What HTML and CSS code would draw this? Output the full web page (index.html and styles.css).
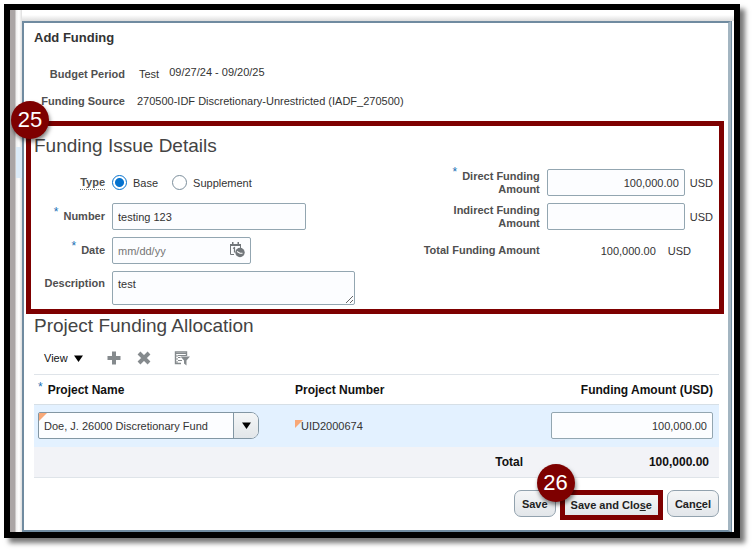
FILE: index.html
```
<!DOCTYPE html>
<html lang="en">
<head>
  <meta charset="UTF-8" />
  <meta name="viewport" content="width=device-width, initial-scale=1.0"/>
  <title>Add Funding</title>
  <link rel="stylesheet" href="styles.css">
</head>
<body>
  <div class="frame">
    <main class="dialog">
      <h1>Add Funding</h1>
      <dl class="summary">
        <dt>Budget Period</dt>
        <dd class="period"><span>Test</span><span class="dates">09/27/24 - 09/20/25</span></dd>
        <dt>Funding Source</dt>
        <dd>270500-IDF Discretionary-Unrestricted (IADF_270500)</dd>
      </dl>

      <section class="details">
        <span class="badge badge-details">25</span>
        <h2>Funding Issue Details</h2>
        <div class="columns">
          <div class="form">
            <span class="label" id="typeLabel"><abbr>Type</abbr></span>
            <div class="radios" role="radiogroup" aria-labelledby="typeLabel">
              <label><input type="radio" name="type" checked>Base</label>
              <label><input type="radio" name="type">Supplement</label>
            </div>
            <label class="label" for="number"><span class="req">*</span>Number</label>
            <input class="field number" type="text" id="number" value="testing 123">
            <label class="label" for="date"><span class="req">*</span>Date</label>
            <div class="date">
              <input class="field" type="text" id="date" placeholder="mm/dd/yy">
              <button class="icon date-button" type="button" aria-label="Select date">
                <svg width="16" height="16" viewBox="0 0 16 16">
                  <path d="M5 12.500H1.500V3H11.500V6" fill="none" stroke="#72777b" stroke-width="1"/>
                  <path d="M1 2h11v2H1zM3 0h1.500v3H3zM8.500 0H10v3H8.500z" fill="#72777b"/>
                  <path d="M4 6.500L5.500 5.500V10.500" fill="none" stroke="#72777b" stroke-width="1.200"/>
                  <circle cx="11" cy="10.500" r="4.700" fill="#72777b"/>
                  <path d="M8 9.500L11 11.200H13.500" fill="none" stroke="#fff" stroke-width="1.100"/>
                </svg>
              </button>
            </div>
            <label class="label" for="description">Description</label>
            <textarea class="field" id="description">test</textarea>
          </div>

          <div class="amounts">
            <label class="label" for="direct"><span class="req">*</span><span>Direct Funding<br>Amount</span></label>
            <input class="field money" type="text" id="direct" value="100,000.00">
            <span>USD</span>
            <label class="label" for="indirect">Indirect Funding<br>Amount</label>
            <input class="field money" type="text" id="indirect">
            <span>USD</span>
            <span class="label">Total Funding Amount</span>
            <div class="total-amount"><span>100,000.00</span><span>USD</span></div>
          </div>
        </div>
      </section>

      <section>
        <h2>Project Funding Allocation</h2>
        <div class="toolbar">
          <button class="view" type="button">View
            <svg width="9" height="7" viewBox="0 0 9 7"><path d="M0 0.500h9L4.500 7z" fill="#000"/></svg>
          </button>
          <button class="icon" type="button" aria-label="Add row">
            <svg width="14" height="14" viewBox="0 0 14 14"><path d="M5 0.500h4V5h4.500v4H9v4.500H5V9H0.500V5H5z" fill="#858a8d"/></svg>
          </button>
          <button class="icon" type="button" aria-label="Delete row">
            <svg width="14" height="14" viewBox="0 0 14 14"><path d="M2 2L12 12M12 2L2 12" stroke="#858a8d" stroke-width="4"/></svg>
          </button>
          <button class="icon filter" type="button" aria-label="Query by example">
            <svg width="16" height="15" viewBox="0 0 16 15">
              <path d="M7 12.500H1.500V1H12.500V5" fill="none" stroke="#858a8d" stroke-width="1.400"/>
              <path d="M1 2.500H13M4 4.500H12M4 6.500H6.500M4 9.500H8" stroke="#858a8d" stroke-width="1.200"/>
              <path d="M3 4V12" stroke="#858a8d" stroke-width="1" stroke-dasharray="2 1"/>
              <path d="M6.500 5.500H16L12.500 9.500V14.500L10 12.500V9.500z" fill="#858a8d"/>
            </svg>
          </button>
        </div>
        <table>
          <thead>
            <tr>
              <th class="name"><span class="req">*</span>Project Name</th>
              <th>Project Number</th>
              <th class="amount">Funding Amount (USD)</th>
            </tr>
          </thead>
          <tbody>
            <tr>
              <td class="name">
                <div class="combo changed">
                  <select aria-label="Project Name">
                    <option>Doe, J. 26000 Discretionary Fund</option>
                  </select>
                  <span class="combo-arrow">
                    <svg width="9" height="7" viewBox="0 0 9 7"><path d="M0 0.500h9L4.500 7z" fill="#000"/></svg>
                  </span>
                </div>
              </td>
              <td><span class="project-number changed">UID2000674</span></td>
              <td class="amount"><input class="field money" type="text" aria-label="Funding Amount" value="100,000.00"></td>
            </tr>
          </tbody>
          <tfoot>
            <tr>
              <td></td>
              <td class="total">Total</td>
              <td class="sum">100,000.00</td>
            </tr>
          </tfoot>
        </table>
      </section>

      <div class="actions">
        <button class="btn" type="button">Save</button>
        <div class="highlight">
          <span class="badge badge-save">26</span>
          <button class="btn" type="button">Save and Clo<u>s</u>e</button>
        </div>
        <button class="btn" type="button">Can<u>c</u>el</button>
      </div>
    </main>
  </div>
</body>
</html>
```
FILE: styles.css
```
* { margin: 0; padding: 0; box-sizing: border-box; }
body {
  font-family: "Liberation Sans", Arial, sans-serif;
  font-size: 11px;
  line-height: 14px;
  color: #333;
  background: #fff;
  padding: 4px 13px 13px 4px;
}
input, select, textarea, button { font: inherit; color: inherit; }
.frame {
  border: 6px solid #000;
  padding: 11px 2px 0 12px;
  background:
    linear-gradient(#dcebf8, #dcebf8) 6px 137px / 6px 31px no-repeat,
    linear-gradient(to right, #aaa5a5 5px, #eee 6px, #fff 9px, #ddd 12px, transparent 12px) no-repeat,
    linear-gradient(#fff, #fff 5px, #ddd 11px, #fff 11px);
  box-shadow: 5px 5px 5px #777;
}
.dialog {
  background: #fff;
  border: 2px solid #708ba0;
  border-right: 3px solid #a3b5c1;
  box-shadow: 1px 0 #708ba0;
  margin-right: 1px;
  padding: 7px 9px 10px 10px;
}
h1 { font-size: 13px; line-height: 15px; color: #333; }
h2 {
  font-size: 19px;
  line-height: 24px;
  font-weight: normal;
  color: #444;
}

/* header values */
.summary {
  display: grid;
  grid-template-columns: 91px 1fr;
  column-gap: 12px;
  row-gap: 13px;
  margin-top: 22px;
}
.summary dt {
  font-weight: bold;
  color: #505050;
  text-align: right;
  white-space: nowrap;
}
.period { display: flex; gap: 10px; padding-left: 2px; }
.dates { margin-top: -2px; }

/* issue details */
.details {
  position: relative;
  border: 5px solid #7e0000;
  margin: 13px -5px 0 -8px;
  padding: 8px 6px 4px 3px;
}
.columns {
  display: flex;
  justify-content: space-between;
  margin-top: 11px;
}
.form, .amounts {
  display: grid;
  column-gap: 7px;
  row-gap: 7px;
  align-content: start;
  align-items: center;
}
.form {
  grid-template-columns: 71px auto;
  grid-template-rows: 27px 27px 27px 34px;
}
.amounts {
  grid-template-columns: auto 138px auto;
  grid-template-rows: 27px 27px 27px;
}
.amounts > span:not(.label) { margin-left: -2px; }
.label {
  display: flex;
  justify-content: flex-end;
  font-weight: bold;
  color: #505050;
  text-align: right;
  white-space: nowrap;
  line-height: 13px;
}
.label abbr { border-bottom: 1px dotted #777; }
.req {
  color: #1a6fb5;
  font-size: 12px;
  font-weight: normal;
  margin: -4px 5px 0 0;
}
.field {
  width: 100%;
  height: 27px;
  border: 1px solid #93a6b1;
  border-radius: 2px;
  background: #fcfdff;
  padding: 0 5px;
  color: #333;
}
.field.number { width: 194px; }
.money { text-align: right; }
textarea.field {
  display: block;
  width: 243px;
  height: 34px;
  padding-top: 5px;
  resize: both;
}
.form label[for="description"] { align-self: start; margin-top: 6px; }
.radios { display: flex; gap: 14px; }
.radios label { display: flex; align-items: center; gap: 6px; }
.radios input {
  appearance: none;
  width: 15px;
  height: 15px;
  border: 1px solid #7d8f9c;
  border-radius: 50%;
  background: #fff;
}
.radios input:checked {
  border-color: #0572ce;
  background: radial-gradient(circle, #0572ce 4px, #fff 5px);
}
.date { position: relative; width: 139px; }
.date .field { display: block; }
.date .field::placeholder { color: #757575; }
.date-button { position: absolute; right: 6px; top: 5px; }
.total-amount {
  grid-column: 2 / 4;
  display: flex;
  gap: 12px;
}
.total-amount span:first-child { width: 109px; text-align: right; }

/* allocation table */
.toolbar {
  display: flex;
  align-items: center;
  gap: 16px;
  height: 36px;
  padding: 4px 0 0 10px;
}
.icon, .view {
  display: flex;
  align-items: center;
  border: none;
  background: none;
}
.view { gap: 6px; color: #111; margin-right: 8px; }
.filter { margin-left: 7px; }
table {
  width: 100%;
  border-collapse: collapse;
  table-layout: fixed;
}
th {
  height: 30px;
  border-top: 1px solid #dfe4e9;
  border-bottom: 1px solid #d6dfe6;
  font-size: 12px;
  text-align: left;
  color: #111;
  padding-left: 5px;
}
th.name, td.name { padding-left: 4px; }
th.amount { width: 173px; text-align: right; padding-right: 6px; }
th .req { vertical-align: 3px; line-height: 8px; }
tbody tr { height: 42px; background: #e3f1ff; }
td { padding-left: 5px; }
td.amount { padding-right: 6px; }
tfoot tr {
  height: 31px;
  background: #f2f3f7;
  border-bottom: 1px solid #dfe4e9;
  color: #111;
  font-size: 12px;
  font-weight: bold;
  text-align: right;
}
.total { padding-right: 23px; }
.sum { padding-right: 10px; }
.combo {
  position: relative;
  display: flex;
  width: 221px;
  height: 27px;
  border: 1px solid #8296a3;
  border-radius: 2px 8px 8px 2px;
  background: #fcfdff;
  overflow: hidden;
}
.combo select {
  appearance: none;
  width: 100%;
  border: none;
  background: none;
  padding-left: 5px;
}
.combo-arrow {
  position: absolute;
  top: 0;
  right: 0;
  bottom: 0;
  width: 25px;
  display: flex;
  align-items: center;
  justify-content: center;
  border-left: 1px solid #8296a3;
  background: linear-gradient(#f4f6f7, #e2e6e9);
  pointer-events: none;
}
.project-number { position: relative; padding-left: 6px; }
/* orange corner on changed values */
.changed::before {
  content: "";
  position: absolute;
  top: 0;
  left: 0;
  border-top: 8px solid #f8a878;
  border-right: 8px solid transparent;
}

/* footer buttons */
.actions {
  display: flex;
  align-items: flex-start;
  justify-content: flex-end;
  gap: 4px;
  margin-top: 12px;
}
.btn {
  height: 27px;
  border: 1px solid #92a2ae;
  border-radius: 7px;
  background: linear-gradient(#f5f6f7, #e2e6ea);
  padding: 0 7px;
  font-weight: bold;
  color: #222;
}
.highlight {
  position: relative;
  border: 5px solid #7e0000;
  background: #7e0000;
}
.highlight .btn {
  display: block;
  height: 20px;
  border: none;
  border-radius: 0;
  padding: 0 6px;
}
.badge {
  position: absolute;
  width: 38px;
  height: 38px;
  border-radius: 50%;
  background: #7e0000;
  color: #fff;
  font-size: 22px;
  line-height: 38px;
  text-align: center;
  box-shadow: 1px 3px 4px rgba(0, 0, 0, 0.5);
}
.badge-details { top: -25px; left: -20px; }
.badge-save { top: -31px; left: -28px; }
```
